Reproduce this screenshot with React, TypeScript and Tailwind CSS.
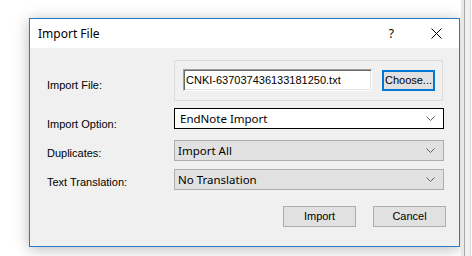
import React from "react";

const Chevron = () => (
  <svg width="9" height="5" viewBox="0 0 9 5" className="shrink-0">
    <path d="M0.5 0.5 L4.5 4.5 L8.5 0.5" fill="none" stroke="#606060" strokeWidth="1" />
  </svg>
);

export default function App() {
  const label = "text-[11px] leading-[13px] text-black w-[127px] shrink-0";
  const sans = { fontFamily: '"Liberation Sans", Arial, sans-serif' } as React.CSSProperties;
  const ui = { fontFamily: '"Noto Sans", "Open Sans", sans-serif' } as React.CSSProperties;
  return (
    <div className="w-[472px] h-[256px] bg-white flex items-start overflow-hidden" style={sans}>
      <div className="ml-[29px] mt-[18px] w-[431px] h-[229px] border border-[#2b7ac4] flex flex-col shadow-[0_2px_14px_rgba(0,0,0,0.28)] shrink-0">
        <div className="h-[29px] bg-white flex items-center shrink-0">
          <span className="ml-[8px] text-[12px] text-black" style={ui}>Import File</span>
          <span className="ml-auto text-[12px] text-black" style={ui}>?</span>
          <svg width="11" height="11" viewBox="0 0 11 11" className="ml-[37px] mr-[17px]">
            <path d="M0.5 0.5 L10.5 10.5 M10.5 0.5 L0.5 10.5" stroke="#000" strokeWidth="1" />
          </svg>
        </div>
        <div className="flex-1 bg-[#f0f0f0] flex flex-col pl-[17px]">
          <div className="mt-[12px] flex items-start h-[41px]">
            <div className={label + " mt-[19px]"}>Import File:</div>
            <div className="w-[269px] h-[41px] border border-[#dcdcdc] flex items-start pl-[8px] pt-[8px]">
              <div className="w-[189px] h-[22px] bg-white border border-t-[#a0a0a0] border-l-[#a0a0a0] border-b-white border-r-white shadow-[inset_1px_1px_0_#696969,inset_-1px_-1px_0_#e3e3e3] flex items-center pl-[2px] text-[11px] text-black">
                CNKI-637037436133181250.txt
              </div>
              <div className="ml-[10px] mt-[1px] w-[53px] h-[21px] border-2 border-[#0078d7] bg-[#e1e1e1] flex items-center justify-center text-[11px] text-black">
                Choose...
              </div>
            </div>
          </div>
          <div className="mt-[7px] flex items-start h-[21px]">
            <div className={label + " mt-[10px]"}>Import Option:</div>
            <div className="w-[270px] h-[21px] bg-white border border-black flex items-center pl-[5px] pr-[8px] text-[11.5px] text-black" style={ui}>
              <span className="flex-1">EndNote Import</span>
              <Chevron />
            </div>
          </div>
          <div className="mt-[11px] flex items-start h-[21px]">
            <div className={label + " mt-[7px]"}>Duplicates:</div>
            <div className="w-[270px] h-[21px] bg-[#e1e1e1] border border-[#adadad] flex items-center pl-[3px] pr-[8px] text-[11.5px] text-black" style={ui}>
              <span className="flex-1">Import All</span>
              <Chevron />
            </div>
          </div>
          <div className="mt-[8px] flex items-start h-[21px]">
            <div className={label + " mt-[7px]"}>Text Translation:</div>
            <div className="w-[270px] h-[21px] bg-[#e1e1e1] border border-[#adadad] flex items-center pl-[3px] pr-[8px] text-[11.5px] text-black" style={ui}>
              <span className="flex-1">No Translation</span>
              <Chevron />
            </div>
          </div>
          <div className="mt-[16px] flex justify-end pr-[13px] gap-[17px]">
            <div className="w-[73px] h-[21px] bg-[#e1e1e1] border border-[#adadad] flex items-center justify-center text-[11px] text-black">Import</div>
            <div className="w-[73px] h-[21px] bg-[#e1e1e1] border border-[#adadad] flex items-center justify-center text-[11px] text-black">Cancel</div>
          </div>
        </div>
      </div>
      <div className="ml-[1px] h-full w-[3px] bg-[#e8e8e8] shrink-0" />
      <div className="h-full w-[1px] bg-[#a8a8a8] shrink-0" />
      <div className="h-full w-[5px] bg-[#f0f0f0] shrink-0" />
      <div className="h-full w-[1px] bg-[#d8d8d8] shrink-0" />
    </div>
  );
}
